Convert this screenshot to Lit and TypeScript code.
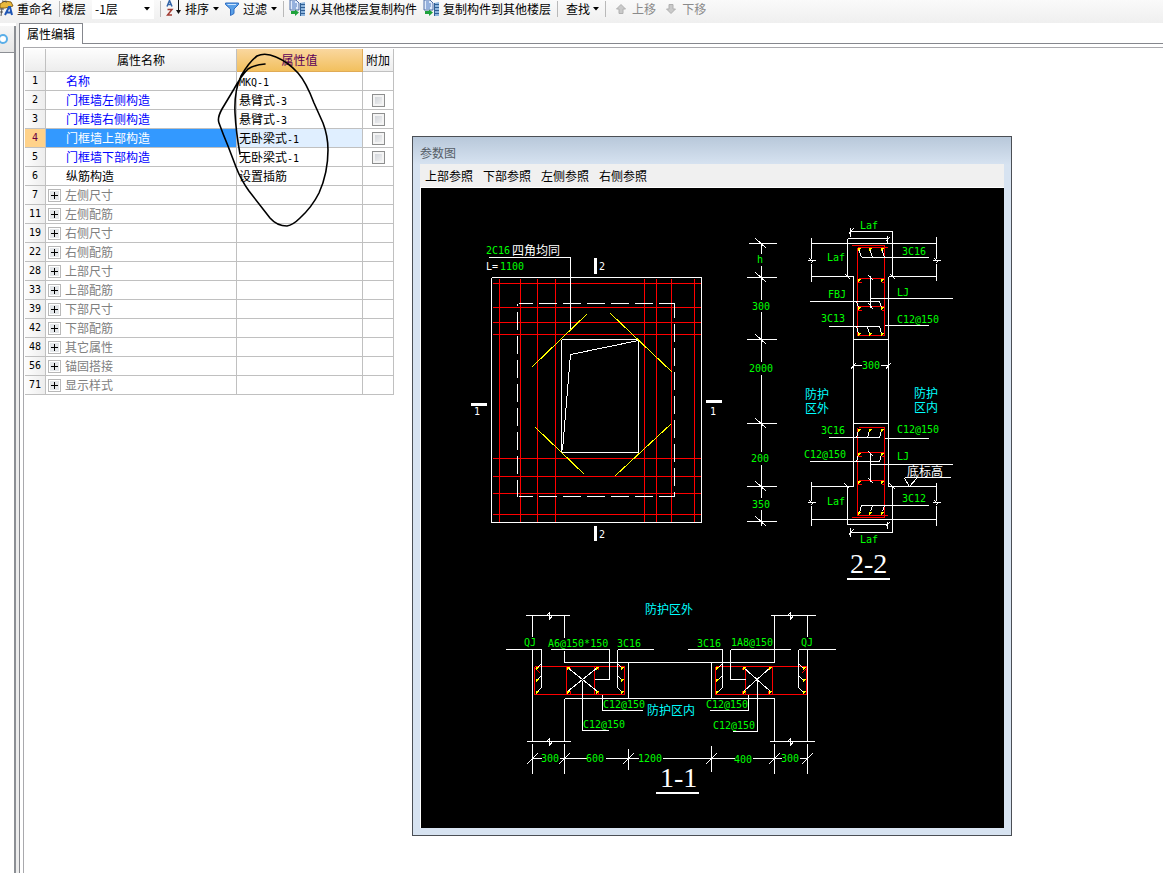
import { LitElement, html, svg, css } from "lit";
import { customElement, property } from "lit/decorators.js";
import { classMap } from "lit/directives/class-map.js";

type Row = { no: number; name: string; value?: string; code?: string; kind: "link" | "plain" | "group"; check?: boolean; selected?: boolean };

const ROWS: Row[] = [
  { no: 1, name: "名称", code: "MKQ-1", kind: "link" },
  { no: 2, name: "门框墙左侧构造", value: "悬臂式", code: "-3", kind: "link", check: true },
  { no: 3, name: "门框墙右侧构造", value: "悬臂式", code: "-3", kind: "link", check: true },
  { no: 4, name: "门框墙上部构造", value: "无卧梁式", code: "-1", kind: "link", check: true, selected: true },
  { no: 5, name: "门框墙下部构造", value: "无卧梁式", code: "-1", kind: "link", check: true },
  { no: 6, name: "纵筋构造", value: "设置插筋", kind: "plain" },
  { no: 7, name: "左侧尺寸", kind: "group" },
  { no: 11, name: "左侧配筋", kind: "group" },
  { no: 19, name: "右侧尺寸", kind: "group" },
  { no: 22, name: "右侧配筋", kind: "group" },
  { no: 28, name: "上部尺寸", kind: "group" },
  { no: 33, name: "上部配筋", kind: "group" },
  { no: 39, name: "下部尺寸", kind: "group" },
  { no: 42, name: "下部配筋", kind: "group" },
  { no: 48, name: "其它属性", kind: "group" },
  { no: 56, name: "锚固搭接", kind: "group" },
  { no: 71, name: "显示样式", kind: "group" },
];

type Seg = [number, number, number, number];
type Label = [number, number, string, string];

const toPath = (segs: Seg[]) => segs.map(([a, b, c, d]) => `M${a} ${b}L${c} ${d}`).join("");
const hs = (y: number, ...x: number[]): Seg[] => {
  const out: Seg[] = [];
  for (let i = 0; i < x.length; i += 2) out.push([x[i], y, x[i + 1], y]);
  return out;
};
const vs = (x: number, ...y: number[]): Seg[] => {
  const out: Seg[] = [];
  for (let i = 0; i < y.length; i += 2) out.push([x, y[i], x, y[i + 1]]);
  return out;
};

/* Elevation of the door frame wall */
const ELEV_WHITE: Seg[] = [
  ...hs(277, 491, 701), ...hs(522, 491, 701), ...vs(491, 277, 522), ...vs(701, 277, 522),
  ...hs(339, 561, 638), ...hs(452, 561, 638), ...vs(561, 339, 452), ...vs(638, 339, 452),
  ...hs(257, 488, 570), ...vs(570, 257, 329),
  [638, 340, 570, 354], [570, 354, 562, 450],
];
const ELEV_RED: Seg[] = [
  ...[499, 520, 537, 555, 644, 656, 671, 694].flatMap((x) => vs(x, 278, 522)),
  ...[283, 307, 322, 334, 458, 476, 493, 514].flatMap((y) => hs(y, 492, 701)),
];
const ELEV_YELLOW: Seg[] = [
  [532, 366, 587, 313], [610, 313, 672, 372], [535, 427, 584, 474], [615, 475, 671, 423],
];

/* Vertical dimension chain */
const CHAIN: Seg[] = [
  ...vs(761, 243, 253, 265, 299, 311, 361, 374, 451, 464, 497, 509, 525),
  ...[243, 277, 339, 423, 486, 521].flatMap((y): Seg[] => [[y === 243 ? 748 : 746, y, 776, y], [755, y - 5, 766, y + 5]]),
];

/* Section 2-2 */
const S2_WHITE: Seg[] = [
  ...hs(243, 811, 936), ...hs(276, 811, 853, 888, 936),
  ...vs(811, 237, 257, 263, 281, 481, 499, 505, 525),
  ...vs(936, 236, 257, 263, 280, 482, 499, 505, 525),
  ...vs(853, 276, 486), ...vs(888, 276, 486),
  ...hs(339, 853, 888), ...hs(423, 853, 888),
  ...hs(365, 853, 861, 880, 888), [850, 369, 855, 363], [885, 369, 890, 363],
  ...vs(892, 231, 276), ...hs(231, 850, 892), ...vs(850, 227, 236), [848, 234, 853, 228],
  ...vs(847, 238, 276), ...hs(238, 847, 887), ...vs(887, 235, 242), [885, 241, 889, 237],
  [845, 274, 850, 279], [890, 274, 895, 279],
  ...hs(257, 861, 928), [858, 248, 861, 257], [869, 248, 872, 257], [881, 248, 884, 257],
  ...vs(870, 275, 307), ...hs(298, 870, 952), [868, 275, 873, 280], [868, 303, 873, 309],
  ...hs(301, 809, 879), [856, 301, 858, 307], [879, 301, 881, 307],
  ...hs(326, 828, 879), [856, 326, 858, 333], [867, 327, 869, 333], [879, 326, 881, 333],
  ...hs(325, 884, 928),
  ...hs(437, 828, 879), [858, 430, 856, 437], [869, 430, 867, 437], [881, 430, 879, 437],
  ...hs(438, 884, 928),
  ...hs(461, 809, 879), [858, 454, 856, 461], [881, 454, 879, 461],
  ...hs(464, 870, 952), ...vs(870, 452, 481), [868, 451, 873, 456], [868, 478, 873, 483],
  ...hs(477, 904, 950), [904, 478, 909, 486], [909, 486, 916, 478],
  ...hs(505, 861, 928), [861, 505, 859, 512], [872, 505, 870, 511], [884, 505, 882, 511],
  ...hs(486, 811, 853, 888, 936), ...hs(519, 811, 936),
  ...vs(847, 486, 524), ...hs(524, 847, 887), ...vs(887, 521, 528), [885, 526, 889, 522],
  ...vs(892, 486, 532), ...hs(532, 850, 892), ...vs(850, 527, 536), [848, 535, 853, 529],
  [844, 483, 849, 488], [889, 483, 895, 489],
];
const S2_RED: Seg[] = [
  ...hs(245, 851, 884), ...hs(247, 857, 887), ...vs(857, 247, 335), ...vs(884, 245, 335), ...hs(335, 858, 884),
  ...[278, 306, 452, 480].flatMap((y) => [...hs(y, 858, 884), ...hs(y + 4, 857, 861, 881, 884)]),
  ...hs(427, 858, 884), ...vs(857, 427, 515), ...vs(884, 427, 517), ...hs(515, 857, 887), ...hs(517, 851, 884),
];

/* Section 1-1 */
const S1_WHITE: Seg[] = [
  ...hs(615, 525, 569, 770, 815), ...hs(741, 526, 570, 769, 814),
  ...vs(532, 615, 636, 648, 741, 743, 773), ...vs(807, 615, 636, 648, 741, 743, 773),
  ...vs(564, 615, 637, 650, 662, 698, 741, 743, 773), ...vs(774, 615, 662, 698, 741, 743, 773),
  ...hs(662, 564, 774), ...hs(698, 564, 774), ...vs(628, 662, 698, 748, 769), ...vs(711, 662, 698, 745, 771),
  ...hs(758, 532, 541, 559, 586, 605, 638, 662, 734, 752, 781, 799, 807),
  ...[532, 564, 628, 711, 774, 807].map((x): Seg => [x - 6, 764, x + 5, 753]),
  ...hs(649, 505, 541, 550, 609, 617, 653, 687, 722, 730, 790, 798, 835),
  ...vs(541, 649, 687), ...vs(609, 649, 679), ...hs(679, 594, 609), ...vs(617, 649, 687),
  ...vs(722, 649, 687), ...vs(730, 649, 679), ...hs(679, 730, 745), ...vs(798, 649, 687),
  ...[668, 680, 692].flatMap((y): Seg[] => [
    [541, y - 5, 536, y], [617, y - 5, 621, y - 1], [722, y - 5, 717, y], [798, y - 5, 803, y],
  ]),
  [567, 667, 597, 691], [567, 691, 597, 667], [743, 667, 770, 691], [743, 691, 770, 667],
  ...vs(582, 680, 730), ...hs(730, 582, 608), ...vs(602, 694, 710), ...hs(710, 602, 642),
  ...vs(757, 680, 731), ...hs(731, 732, 757), ...vs(748, 694, 710), ...hs(710, 709, 748),
];
const S1_RED: Seg[] = [
  ...hs(666, 534, 624, 715, 806), ...hs(694, 534, 624, 715, 806),
  ...[534, 566, 594, 624, 715, 745, 772, 806].flatMap((x) => vs(x, 666, 694)),
  ...[570, 598, 742, 768].flatMap((x) => vs(x, 667, 669, 690, 693)),
  [535, 668, 540, 673], [801, 673, 806, 668],
];

const DOTS: [number, number][] = [
  ...[248, 333, 429, 512].flatMap((y): [number, number][] => [[858, y], [869, y], [881, y]]),
  ...[279, 307, 453, 481].flatMap((y): [number, number][] => [[858, y], [881, y]]),
  ...[667, 679, 691].flatMap((y): [number, number][] => [[536, y], [621, y], [716, y], [803, y]]),
  ...[667, 691].flatMap((y): [number, number][] => [[567, y], [596, y], [743, y], [769, y]]),
];

const LABELS: Label[] = [
  [486, 254, "2C16", "g"], [512, 255, "四角均同", "w"], [486, 270, "L=", "w"], [500, 270, "1100", "g"],
  [599, 270, "2", "w"], [599, 538, "2", "w"], [474, 415, "1", "w"], [710, 415, "1", "w"],
  [757, 263, "h", "g"], [752, 310, "300", "g"], [749, 372, "2000", "g"], [751, 462, "200", "g"], [752, 508, "350", "g"],
  [860, 229, "Laf", "g"], [827, 261, "Laf", "g"], [902, 255, "3C16", "g"], [897, 296, "LJ", "g"], [828, 298, "FBJ", "g"],
  [821, 322, "3C13", "g"], [897, 323, "C12@150", "g"], [862, 369, "300", "g"],
  [805, 399, "防护\n区外", "c"], [914, 398, "防护\n区内", "c"],
  [821, 434, "3C16", "g"], [897, 433, "C12@150", "g"], [804, 458, "C12@150", "g"], [897, 460, "LJ", "g"],
  [907, 476, "底标高", "w"], [902, 502, "3C12", "g"], [827, 505, "Laf", "g"], [860, 543, "Laf", "g"],
  [850, 573, "2-2", "title"], [660, 787, "1-1", "title"],
  [645, 614, "防护区外", "c"], [647, 715, "防护区内", "c"],
  [524, 646, "QJ", "g"], [548, 647, "A6@150*150", "g"], [617, 647, "3C16", "g"],
  [697, 647, "3C16", "g"], [731, 646, "1A8@150", "g"], [801, 646, "QJ", "g"],
  [603, 708, "C12@150", "g"], [583, 728, "C12@150", "g"], [706, 708, "C12@150", "g"], [713, 729, "C12@150", "g"],
  [541, 762, "300", "g"], [586, 762, "600", "g"], [638, 762, "1200", "g"], [734, 763, "400", "g"], [781, 762, "300", "g"],
];

@customElement("cad-drawing")
export class CadDrawing extends LitElement {
  static styles = css`
    :host { display: block; background: #000; }
    svg { display: block; width: 100%; height: auto; }
    .lines { fill: none; stroke-width: 1; shape-rendering: crispEdges; }
    .white { stroke: #fff; }
    .red { stroke: #f00; }
    .yellow { stroke: #ff0; }
    .bar { fill: #fff; }
    text { font: 10px "DejaVu Sans Mono", monospace; }
    .g { fill: #0f0; }
    .w { fill: #fff; font: 12px "DejaVu Sans Mono", "Noto Sans CJK SC", sans-serif; }
    .w.latin { font-size: 10px; }
    .c { fill: #0ff; font: 12px "Noto Sans CJK SC", sans-serif; }
    .title { fill: #fff; font: 28px "Liberation Serif", serif; }
  `;

  render() {
    return html`<svg viewBox="421 188 583 640" role="img" aria-label="参数图">
      <g class="lines" transform="translate(.5 .5)">
        <path class="red" d=${toPath([...ELEV_RED, ...S2_RED, ...S1_RED])}></path>
        <path class="white" d=${toPath([...ELEV_WHITE, ...CHAIN, ...S2_WHITE, ...S1_WHITE])}></path>
        <path class="white" stroke-dasharray="18 6" stroke-dashoffset="4" d="M518 303H674M518 496H674M674 303V496"></path>
        <path class="white" stroke-dasharray="18 6" stroke-dashoffset="16" d="M517 303V496"></path>
        <path class="white" d=${[
          [811, 260], [936, 260], [811, 502], [936, 502],
        ].map(([x, y]) => `M${x - 4} ${y}H${x - 1}L${x} ${y - 3}M${x} ${y + 3}L${x + 1} ${y}H${x + 4}M${x - 2} ${y - 2}L${x + 2} ${y + 2}`).join("")}></path>
        <path class="white" d=${[
          [549, 615], [549, 741], [790, 615], [790, 741],
        ].map(([x, y]) => `M${x - 3} ${y}L${x} ${y - 3}V${y + 4}L${x + 3} ${y}`).join("")}></path>
        <path class="yellow" d=${toPath(ELEV_YELLOW)}></path>
        <path class="yellow" d=${DOTS.map(([x, y]) => `M${x - 1} ${y}h3M${x - 1} ${y + 1}h2M${x} ${y - 1}v3`).join("")}></path>
      </g>
      <path class="bar" d="M594 258h3v16h-3zM594 526h3v15h-3zM471 403h16v3h-16zM706 400h16v3h-16zM847 578h43v2h-43zM656 792h43v2h-43z"></path>
      ${LABELS.map(([x, y, t, c]) => svg`<text x=${x} y=${y} class=${c === "w" && t.charCodeAt(0) < 128 ? "w latin" : c}>${
        t.split("\n").map((line, i) => svg`<tspan x=${x} dy=${i * 14}>${line}</tspan>`)}</text>`)}
    </svg>`;
  }
}

@customElement("property-table")
export class PropertyTable extends LitElement {
  @property({ attribute: false }) rows: Row[] = [];

  static styles = css`
    :host { display: block; }
    table { border-collapse: separate; border-spacing: 0; table-layout: fixed; width: 369px; font-size: 12px; line-height: 16px; }
    .c-no { width: 21px; }
    .c-name { width: 191px; }
    .c-value { width: 126px; }
    .c-extra { width: 31px; }
    th, td { box-sizing: border-box; height: 19px; padding: 0; border: solid #c0c0c0; border-width: 0 1px 1px 0; font-weight: 400; text-align: left; white-space: nowrap; overflow: hidden; }
    thead th { height: 23px; text-align: center; background: linear-gradient(#fdfdfd, #ededed); }
    thead .active { background: linear-gradient(#fad79f, #f2c05e); color: #5b0058; border-color: #e0ab56; }
    tbody th { text-align: center; background: linear-gradient(90deg, #fdfdfd, #ededed); font: 10px/16px "DejaVu Sans Mono", monospace; }
    .name { display: flex; align-items: center; height: 18px; padding-left: 2px; gap: 4px; }
    .name.leaf { padding-left: 20px; }
    .link { color: #00f; }
    .group { color: #808080; }
    .value { padding-left: 2px; }
    .code { font: 10px "DejaVu Sans Mono", monospace; }
    .extra { text-align: center; line-height: 0; }
    .sel th { background: #ffd28a; color: #6b0040; }
    .sel td { background: #e0efff; }
    .sel .namecell { background: #3399ff; }
    .sel .link { color: #fff; }
    .sel .plaincell { background: #fff; }
    .expand { box-sizing: border-box; width: 13px; height: 13px; margin: 0; padding: 0; display: grid; place-items: center; border: 1px solid #b8b8b8; background: #e4e7ea; box-shadow: inset 0 0 0 1px #fff; color: #000; }
    .expand svg { display: block; }
    input { appearance: none; box-sizing: border-box; width: 13px; height: 13px; margin: 0; border: 1px solid #8e8f8f; background: linear-gradient(135deg, #cbcfd5, #f6f6f6); box-shadow: inset 0 0 0 2px #f4f4f4; }
  `;

  render() {
    return html`<table>
      <colgroup><col class="c-no" /><col class="c-name" /><col class="c-value" /><col class="c-extra" /></colgroup>
      <thead>
        <tr><th></th><th scope="col">属性名称</th><th scope="col" class="active">属性值</th><th scope="col">附加</th></tr>
      </thead>
      <tbody>
        ${this.rows.map((r) => html`<tr class=${classMap({ sel: !!r.selected })}>
          <th scope="row">${r.no}</th>
          <td class="namecell"><div class=${classMap({ name: true, leaf: r.kind !== "group", [r.kind]: true })}>
            ${r.kind === "group"
              ? html`<button class="expand" aria-label=${"展开" + r.name}><svg width="9" height="9" viewBox="0 0 9 9"><path d="M1 4.5h7M4.5 1v7" stroke="#000"></path></svg></button>`
              : null}<span>${r.name}</span></div></td>
          <td class="value">${r.value ?? ""}${r.code ? html`<span class="code">${r.code}</span>` : null}</td>
          <td class="extra plaincell">${r.check ? html`<input type="checkbox" aria-label=${"附加 " + r.name} />` : null}</td>
        </tr>`)}
      </tbody>
    </table>`;
  }
}

const caret = html`<svg class="caret" width="6" height="4" viewBox="0 0 6 4"><path d="M0 0h6L3 3.5z" fill="#000"></path></svg>`;

const copyIcon = html`<svg width="17" height="17" viewBox="0 0 17 17">
  <path d="M1 0h6l3 3v7H1z" fill="#dfeafa" stroke="#4f6fa8"></path>
  <path d="M3 2h3M3 4h5M3 6h5M3 8h4" stroke="#4d78c0"></path>
  <path d="M11 3l5-1v14h-5z" fill="#8fb6de"></path>
  <path d="M11 4.5h5M11 7.5h5M11 10.5h5M11 13.5h5M11.500 3v13" stroke="#2f5f95"></path>
  <path d="M2 11v3h4v2l4-3.500-4-3v1.500z" fill="#1fa23c"></path>
</svg>`;

const moveIcon = (down: boolean) => html`<svg width="10" height="10" viewBox="0 0 10 10">
  <path d=${down ? "M5 9.5L.5 5H3V.5h4V5h2.5z" : "M5 .5L9.5 5H7v4.5H3V5H.5z"} fill="#c9c9c9" stroke="#b0b0b0"></path></svg>`;

@customElement("app-root")
export class AppRoot extends LitElement {
  static styles = css`
    :host { display: flex; flex-direction: column; position: relative; min-height: 100vh; overflow: hidden; background: #fff; color: #000; font: 12px/16px "Noto Sans CJK SC", sans-serif; }
    button, select { font: inherit; color: inherit; margin: 0; padding: 0; border: 0; background: none; }
    .toolbar { display: flex; align-items: center; box-sizing: border-box; height: 23px; padding-bottom: 6px; background: linear-gradient(#fafafa, #efefef); white-space: nowrap; }
    .tool { display: flex; align-items: center; gap: 3px; }
    .tool svg { flex: none; }
    .tool.wide { gap: 4px; }
    .tool.find { padding-left: 3px; }
    .tool.move { gap: 6px; color: #8a8a8a; padding: 0 5px; }
    .sep { width: 1px; height: 16px; background: #b9b9b9; margin: 0 5px 0 6px; }
    .floor { display: flex; align-items: center; gap: 6px; margin-left: -3px; }
    .pick { display: grid; align-items: center; }
    .pick select { grid-area: 1 / 1; appearance: none; width: 62px; height: 20px; padding-left: 3px; background: #fff; }
    .pick .caret { grid-area: 1 / 1; justify-self: end; margin-right: 4px; pointer-events: none; }
    .space { margin-left: 6px; }
    .work { flex: 1; display: grid; grid-template-columns: 16px 3px minmax(0, 1fr); }
    .side { box-sizing: border-box; border-right: 2px solid #8c8f94; margin-top: 3px; overflow: hidden; }
    .side-head { box-sizing: border-box; height: 27px; display: flex; align-items: center; background: linear-gradient(#f6f6f6, #e6e6e6); border-bottom: 1px solid #8c8f94; }
    .gutter { background: #ececec; }
    .main { border-left: 1px solid #85878d; display: flex; flex-direction: column; }
    .tabs { display: flex; }
    .tab { box-sizing: border-box; height: 21px; padding: 0 7px; border-top: 1px solid #85878d; border-right: 1px solid #85878d; }
    .rest { flex: 1; border-bottom: 1px solid #85878d; }
    .panel { flex: 1; margin: 3px 0 0 3px; padding: 1px; border: solid #a9a9ad; border-width: 1px 0 0 1px; }
    .dialog { position: absolute; left: 412px; top: 136px; box-sizing: border-box; width: 600px; padding: 0 7px 7px; border: 1px solid #4b4f55; background: linear-gradient(#b8c8da, #d7e3f1 28px); }
    .caption { height: 27px; line-height: 32px; color: #555d66; }
    .menu { display: flex; gap: 10px; height: 23px; padding-left: 5px; background: #f0f0f0; }
    cad-drawing { border: solid #fff; border-width: 1px 0 0 1px; }
    .pen { position: absolute; left: 210px; top: 48px; pointer-events: none; }
  `;

  render() {
    return html`
      <div class="toolbar" role="toolbar">
        <button class="tool">
          <svg width="14" height="17" viewBox="0 0 14 17">
            <path d="M0 4l5-3 6 1 2 4-8 2H0z" fill="#e9b93c" stroke="#8a6216"></path>
            <path d="M2 1l5 1" stroke="#444"></path>
            <path d="M0 9h4M0 12h3M2 8l-1 8" stroke="#555"></path>
            <path d="M5 15l4-8h1l2 8M6.500 12.500h5" stroke="#1f56b5" stroke-width="2" fill="none"></path>
          </svg>重命名</button>
        <span class="sep"></span>
        <div class="floor"><label for="floor">楼层</label>
          <span class="pick"><select id="floor"><option>-1层</option></select>${caret}</span></div>
        <span class="sep"></span>
        <button class="tool wide">
          <svg width="15" height="17" viewBox="0 0 15 17">
            <path d="M1 6.500L3.500.5 6 6.500M2 4.500h3" stroke="#3465a8" stroke-width="1.500" fill="none"></path>
            <path d="M1.500 9.500H6L1.500 15H6" stroke="#a23b32" stroke-width="1.500" fill="none"></path>
            <path d="M12.500 0v12" stroke="#111"></path><path d="M10 10h5l-2.500 4z" fill="#111"></path>
          </svg><span>排序</span>${caret}</button>
        <button class="tool wide space">
          <svg width="14" height="14" viewBox="0 0 14 14"><path d="M.5 1h13v1.500L9 7v4.500L5.500 13.500V7L.5 2.500z" fill="#5aa0e8" stroke="#2f6cc0"></path><path d="M2.500 2.500H11" stroke="#cfe6ff"></path></svg>
          <span>过滤</span>${caret}</button>
        <span class="sep"></span>
        <button class="tool">${copyIcon}从其他楼层复制构件</button>
        <button class="tool space">${copyIcon}复制构件到其他楼层</button>
        <span class="sep"></span>
        <button class="tool find">查找${caret}</button>
        <span class="sep"></span>
        <button class="tool move" disabled>${moveIcon(false)}上移</button>
        <button class="tool move" disabled>${moveIcon(true)}下移</button>
      </div>
      <div class="work">
        <div class="side"><div class="side-head">
          <svg width="9" height="12" viewBox="0 0 9 12"><circle cx="3" cy="6" r="4" fill="#fff" stroke="#5aaee8" stroke-width="2"></circle></svg>
        </div></div>
        <div class="gutter"></div>
        <div class="main">
          <div class="tabs" role="tablist"><button class="tab" role="tab" aria-selected="true">属性编辑</button><span class="rest"></span></div>
          <div class="panel"><property-table .rows=${ROWS}></property-table></div>
        </div>
      </div>
      <section class="dialog" role="dialog" aria-labelledby="cap">
        <div class="caption" id="cap">参数图</div>
        <div class="menu">${["上部参照", "下部参照", "左侧参照", "右侧参照"].map((m) => html`<button>${m}</button>`)}</div>
        <cad-drawing></cad-drawing>
      </section>
      <svg class="pen" width="125" height="185" viewBox="210 48 125 185" aria-hidden="true">
        <path fill="none" stroke="#000" stroke-width="1.6" stroke-linecap="round" stroke-linejoin="round"
          d="M265 64Q254 65 248 69Q241 76 234 89L222 109Q217 118 219 123Q223 134 228 146L236 167Q241 180 249 191L270 218Q277 226 287 226Q293 225 300 218Q312 207 319 193Q328 173 328 150Q328 136 323 123L314 103Q306 82 298 73Q288 62 276 57Q265 52 257 56Q249 62 241 76Q234 91 235 113Q236 132 240 154"></path>
      </svg>
    `;
  }
}
